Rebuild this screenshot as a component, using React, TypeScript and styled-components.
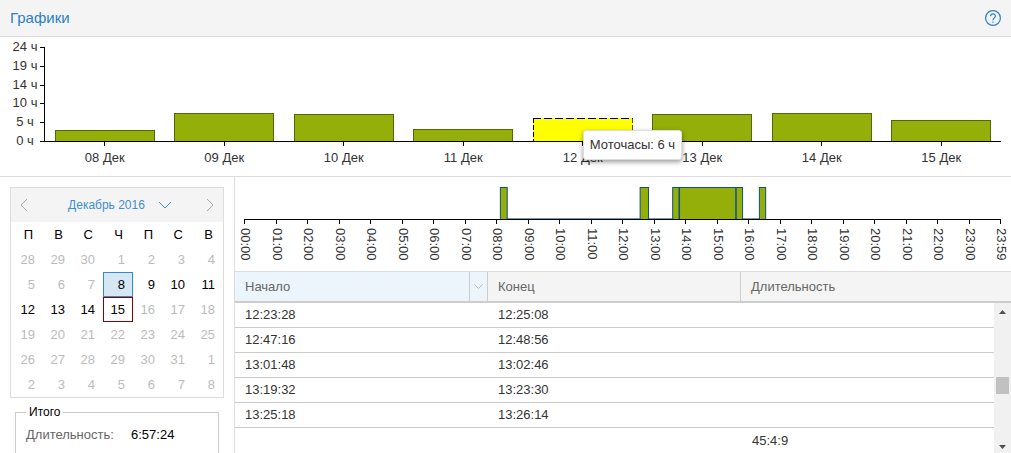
import React from "react";
import styled, { createGlobalStyle, css } from "styled-components";

const Global = createGlobalStyle`
  *, *::before, *::after { box-sizing: border-box; }
  body {
    margin: 0;
    background: #fff;
    color: #333;
    font: 13px/20px "Liberation Sans", Arial, sans-serif;
    overflow: hidden;
  }
  button { font: inherit; color: inherit; border: 0; padding: 0; background: none; cursor: pointer; }
`;

const Page = styled.div`
  min-height: 100vh;
  display: flex;
  flex-direction: column;
`;

const Header = styled.header`
  display: flex;
  align-items: center;
  justify-content: space-between;
  height: 37px;
  padding: 0 10px;
  background: #f4f4f4;
  border-bottom: 1px solid #ddd;
`;

const Title = styled.h1`
  margin: 0;
  font-size: 15px;
  font-weight: 400;
  color: #2a80c8;
`;

const IconButton = styled.button`
  display: flex;
  align-items: center;
  justify-content: center;
`;

const ChartPanel = styled.section`
  display: flex;
  height: 140px;
  padding: 10px 10px 0 10px;
  border-bottom: 1px solid #ddd;
`;

const YLabels = styled.div`
  display: flex;
  flex-direction: column;
  justify-content: space-between;
  width: 30px;
  height: 112px;
  margin-top: -9px;
  line-height: 18px;
  text-align: center;
`;

const YTicks = styled.div`
  display: flex;
  flex-direction: column;
  justify-content: space-between;
  width: 5px;
  height: 95px;
  border-right: 1px solid #000;
`;

const YTick = styled.i`
  height: 1px;
  background: #000;
`;

const Days = styled.div`
  display: flex;
  flex: 1;
`;

const Day = styled.div`
  display: flex;
  flex: 1;
  flex-direction: column;
  align-items: center;
`;

const BarArea = styled.div`
  display: flex;
  align-items: flex-end;
  justify-content: center;
  width: 100%;
  height: 95px;
  border-bottom: 1px solid #000;
`;

const Bar = styled.div<{ $height: number }>`
  position: relative;
  width: 84%;
  height: ${(p) => p.$height}px;
  background: #94ae0a;
  border: 1px solid #566606;
  border-bottom: 0;
`;

const ActiveBar = styled(Bar)`
  background: #ff0;
  border: 0;

  > svg { display: block; width: 100%; height: 100%; }
`;

const Tip = styled.div`
  position: absolute;
  top: 12px;
  left: 50%;
  z-index: 1;
  padding: 4px 6px;
  background: #fff;
  border: 1px solid #ddd;
  border-radius: 3px;
  box-shadow: 0 2px 5px rgba(0, 0, 0, 0.4);
  white-space: nowrap;
`;

const DayTick = styled.i`
  width: 1px;
  height: 4px;
  margin-bottom: 2px;
  background: #000;
`;

const Body = styled.div`
  display: flex;
  flex: 1;
`;

const Sidebar = styled.aside`
  flex: none;
  width: 235px;
  padding: 10px 10px 0;
  border-right: 1px solid #ddd;
`;

const Calendar = styled.div`
  border: 1px solid #ddd;
`;

const CalendarBar = styled.div`
  display: flex;
  align-items: center;
  justify-content: space-between;
  height: 34px;
  padding: 0 8px;
  background: #f4f4f4;
`;

const MonthButton = styled(IconButton)`
  gap: 13px;
  padding-left: 6px;
  font-size: 12px;
  color: #3f8fd2;
`;

const Dates = styled.table`
  width: 100%;
  table-layout: fixed;
  border-collapse: separate;
  border-spacing: 0;
  padding-left: 2px;

  th {
    height: 25px;
    padding: 0 10px 0 0;
    font-weight: 400;
    color: #000;
    text-align: right;
  }
  td { height: 25px; padding: 0; }
`;

const DateButton = styled.button<{ $kind: string }>`
  display: block;
  width: 100%;
  height: 25px;
  padding-right: 7px;
  text-align: right;
  color: #bbb;
  border: 1px solid transparent;
  ${(p) => p.$kind !== "off" && css`color: #000;`}
  ${(p) => p.$kind === "selected" && css`background: #d5e6f5; border-color: #2f8bcd;`}
  ${(p) => p.$kind === "today" && css`border-color: #8b0000;`}
`;

const Totals = styled.fieldset`
  margin: 5px 5px 0;
  padding: 4px 10px 10px;
  border: 1px solid #ccc;
  border-bottom: 0;

  legend { padding: 0 3px; font-size: 12px; line-height: 18px; color: #000; }
  dl { display: flex; margin: 0; }
  dt { width: 105px; color: #666; }
  dd { margin: 0; color: #000; }
`;

const Main = styled.main`
  display: flex;
  flex: 1;
  flex-direction: column;
  min-width: 0;
`;

const TimelineBox = styled.div`
  height: 94px;
  padding: 10px 11px 0 9px;

  > svg { display: block; width: 100%; height: 80px; overflow: visible; }
  text { font-size: 13px; fill: #333; }
`;

const Grid = styled.table`
  width: 100%;
  table-layout: fixed;
  border-collapse: separate;
  border-spacing: 0;

  th, td { padding: 0 10px; text-align: left; font-weight: 400; }
`;

const GridHead = styled.div`
  padding-right: 17px;
  background: #f4f4f4;
  border-top: 1px solid #ddd;
  border-bottom: 2px solid #ccc;

  th { height: 29px; color: #666; border-right: 1px solid #ccc; }
  th:last-child { border-right: 0; }
  th[aria-sort] { padding-right: 0; background: #edf5fc; }
`;

const SortHead = styled.div`
  display: flex;
  justify-content: space-between;
  align-items: center;
  height: 29px;
`;

const MenuButton = styled(IconButton)`
  width: 18px;
  height: 29px;
  border-left: 1px solid #ccc;
`;

const GridBody = styled.div`
  display: flex;
  flex: 1;
`;

const Rows = styled.div`
  flex: 1;
  min-width: 0;

  td { height: 25px; border-bottom: 1px solid #ccc; }
  tfoot td { border-bottom: 0; padding-left: 11px; }
`;

const ScrollBar = styled.div`
  display: flex;
  flex: none;
  flex-direction: column;
  align-items: center;
  width: 17px;
  background: #f1f1f1;
`;

const ScrollArrow = styled(IconButton)`
  width: 17px;
  height: 17px;
`;

const Thumb = styled.div`
  width: 13px;
  height: 17px;
  margin: 57px 0 auto;
  background: #c1c1c1;
`;

const hours = ["24 ч", "19 ч", "14 ч", "10 ч", "5 ч", "0 ч"];

const days = [
  { label: "08 Дек", height: 11 },
  { label: "09 Дек", height: 28 },
  { label: "10 Дек", height: 27 },
  { label: "11 Дек", height: 12 },
  { label: "12 Дек", height: 23, tip: "Моточасы: 6 ч" },
  { label: "13 Дек", height: 27 },
  { label: "14 Дек", height: 28 },
  { label: "15 Дек", height: 21 },
];

const weekdays = ["П", "В", "С", "Ч", "П", "С", "В"];
const weeks = [
  [28, 29, 30, 1, 2, 3, 4],
  [5, 6, 7, 8, 9, 10, 11],
  [12, 13, 14, 15, 16, 17, 18],
  [19, 20, 21, 22, 23, 24, 25],
  [26, 27, 28, 29, 30, 31, 1],
  [2, 3, 4, 5, 6, 7, 8],
];

const dateKind = (week: number, day: number) => {
  if (week === 1 && day === 8) return "selected";
  if (week === 2 && day === 15) return "today";
  if ((week === 1 || week === 2) && day > 8 && day < 15) return "on";
  return "off";
};

const MINUTES = 1439;
const at = (m: number) => `${(m / MINUTES) * 100}%`;
const ticks = Array.from({ length: 25 }, (_, h) => ({
  minute: Math.min(h * 60, MINUTES),
  label: h === 24 ? "23:59" : `${String(h).padStart(2, "0")}:00`,
}));
const runs = [
  [488, 501],
  [754, 770],
  [816, 828],
  [829, 936],
  [937, 949],
  [981, 993],
];

const rows = [
  ["12:23:28", "12:25:08"],
  ["12:47:16", "12:48:56"],
  ["13:01:48", "13:02:46"],
  ["13:19:32", "13:23:30"],
  ["13:25:18", "13:26:14"],
];

const Stroke = ({ d, w, h, color }: { d: string; w: number; h: number; color: string }) => (
  <svg width={w} height={h} fill="none" stroke={color} aria-hidden="true">
    <path d={d} />
  </svg>
);

const Arrow = ({ d }: { d: string }) => (
  <svg width="7" height="4" fill="#505050" aria-hidden="true">
    <path d={d} />
  </svg>
);

const Timeline = () => (
  <TimelineBox>
    <svg role="img" aria-label="Работа по часам">
      <line x1={at(488)} x2={at(992)} y1="31.5" y2="31.5" stroke="#7a98b3" />
      {runs.map(([from, to]) => (
        <rect
          key={from}
          x={at(from)}
          y="0.5"
          width={at(to - from)}
          height="32"
          fill="#94ae0a"
          stroke="#115078"
        />
      ))}
      <line x1="0" x2="100%" y1="32.5" y2="32.5" stroke="#000" />
      {ticks.map((t) => (
        <svg key={t.label} x={at(t.minute)} overflow="visible">
          <path d="M0.5 32V37" stroke="#000" shapeRendering="crispEdges" />
          <text transform="translate(-3 41) rotate(90)">{t.label}</text>
        </svg>
      ))}
    </svg>
  </TimelineBox>
);

export default function App() {
  return (
    <Page>
      <Global />
      <Header>
        <Title>Графики</Title>
        <IconButton aria-label="Справка">
          <svg width="16" height="16" fill="none" stroke="#2a80c8" aria-hidden="true">
            <circle cx="8" cy="8" r="7.4" strokeWidth="1.2" />
            <path d="M5.6 6.2C5.6 3 10.4 3 10.4 6.1C10.4 8 8 7.8 8 10.2M8 11.4V12.8" strokeWidth="1.2" />
          </svg>
        </IconButton>
      </Header>

      <ChartPanel>
        <YLabels>
          {hours.map((h) => (
            <span key={h}>{h}</span>
          ))}
        </YLabels>
        <YTicks>
          {hours.map((h) => (
            <YTick key={h} />
          ))}
        </YTicks>
        <Days>
          {days.map((d) => (
            <Day key={d.label}>
              <BarArea>
                {d.tip ? (
                  <ActiveBar $height={d.height}>
                    <svg aria-hidden="true">
                      <line x1="0" x2="100%" y1="0.5" y2="0.5" stroke="#000" strokeDasharray="8 3" />
                      <line x1="0.5" x2="0.5" y1="0" y2="100%" stroke="#000" strokeDasharray="5 2" />
                      <line x1="100%" x2="100%" y1="0" y2="100%" stroke="#000" strokeWidth="2" strokeDasharray="5 2" />
                    </svg>
                    <Tip role="tooltip">{d.tip}</Tip>
                  </ActiveBar>
                ) : (
                  <Bar $height={d.height} />
                )}
              </BarArea>
              <DayTick />
              {d.label}
            </Day>
          ))}
        </Days>
      </ChartPanel>

      <Body>
        <Sidebar>
          <Calendar>
            <CalendarBar>
              <IconButton aria-label="Предыдущий месяц">
                <Stroke d="M8 1L2 7L8 13" w={9} h={14} color="#aaa" />
              </IconButton>
              <MonthButton>
                Декабрь 2016
                <Stroke d="M1 1L7 7L13 1" w={14} h={8} color="#3f8fd2" />
              </MonthButton>
              <IconButton aria-label="Следующий месяц">
                <Stroke d="M1 1L7 7L1 13" w={9} h={14} color="#aaa" />
              </IconButton>
            </CalendarBar>
            <Dates>
              <thead>
                <tr>
                  {weekdays.map((w, i) => (
                    <th key={i} scope="col">{w}</th>
                  ))}
                </tr>
              </thead>
              <tbody>
                {weeks.map((week, w) => (
                  <tr key={w}>
                    {week.map((day) => (
                      <td key={day}>
                        <DateButton $kind={dateKind(w, day)}>{day}</DateButton>
                      </td>
                    ))}
                  </tr>
                ))}
              </tbody>
            </Dates>
          </Calendar>
          <Totals>
            <legend>Итого</legend>
            <dl>
              <dt>Длительность:</dt>
              <dd>6:57:24</dd>
            </dl>
          </Totals>
        </Sidebar>

        <Main>
          <Timeline />
          <GridHead>
            <Grid>
              <thead>
                <tr>
                  <th scope="col" aria-sort="none">
                    <SortHead>
                      Начало
                      <MenuButton aria-label="Меню столбца">
                        <Stroke d="M0.5 0.5L4.5 4.5L8.5 0.5" w={9} h={6} color="#bbb" />
                      </MenuButton>
                    </SortHead>
                  </th>
                  <th scope="col">Конец</th>
                  <th scope="col">Длительность</th>
                </tr>
              </thead>
            </Grid>
          </GridHead>
          <GridBody>
            <Rows>
              <Grid>
                <tbody>
                  {rows.map(([start, end]) => (
                    <tr key={start}>
                      <td>{start}</td>
                      <td>{end}</td>
                      <td />
                    </tr>
                  ))}
                </tbody>
                <tfoot>
                  <tr>
                    <td />
                    <td />
                    <td>45:4:9</td>
                  </tr>
                </tfoot>
              </Grid>
            </Rows>
            <ScrollBar>
              <ScrollArrow aria-label="Вверх">
                <Arrow d="M0 4L3.5 0L7 4Z" />
              </ScrollArrow>
              <Thumb />
              <ScrollArrow aria-label="Вниз">
                <Arrow d="M0 0L3.5 4L7 0Z" />
              </ScrollArrow>
            </ScrollBar>
          </GridBody>
        </Main>
      </Body>
    </Page>
  );
}
